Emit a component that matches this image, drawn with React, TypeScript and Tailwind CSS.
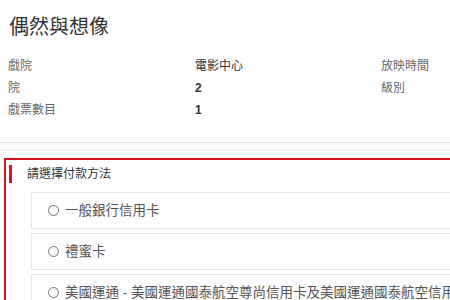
const font = { fontFamily: '"Liberation Sans", "Noto Sans CJK TC", sans-serif' };

const infoRows = [
  { label: '戲院', value: '電影中心', bold: false, extra: '放映時間' },
  { label: '院', value: '2', bold: true, extra: '級別' },
  { label: '戲票數目', value: '1', bold: true, extra: '' },
];

const payments = [
  '一般銀行信用卡',
  '禮蜜卡',
  '美國運通 - 美國運通國泰航空尊尚信用卡及美國運通國泰航空信用卡',
];

function PaymentOption({ label }: { label: string }) {
  return (
    <div className="flex items-center h-[37px] border border-[#e6e6e6] bg-white pl-[16px] whitespace-nowrap">
      <span className="w-[11px] h-[11px] rounded-full border border-[#777] bg-white shrink-0" />
      <span className="ml-[6px] text-[13.5px] leading-[20px] text-[#555]">{label}</span>
    </div>
  );
}

export default function App() {
  return (
    <div className="w-[450px] h-[300px] overflow-hidden bg-white" style={font}>
      <div className="w-[640px]">
        {/* movie summary */}
        <div className="pl-[8px] pt-[13px]">
          <h1 className="text-[20px] leading-[28px] text-[#333] pl-[1px] mb-[14px]">偶然與想像</h1>
          {infoRows.map((row) => (
            <div key={row.label} className="flex h-[22px] leading-[22px] text-[12px]">
              <div className="w-[187px] text-[#666]">{row.label}</div>
              <div className={`w-[186px] text-[#333] ${row.bold ? 'font-bold' : ''}`}>{row.value}</div>
              <div className="w-[186px] text-[#666]">{row.extra}</div>
            </div>
          ))}
        </div>

        <div className="mt-[21px] border-t border-[#e3e3e3] h-[8px] bg-[#fcfcfc]" />
        <div className="border-t border-[#e6e6e6] h-[8px]" />

        {/* payment section */}
        <div className="ml-[4px] border-2 border-[#d7141f] pl-[3px] pt-[5px] pb-4">
          <div className="flex items-center h-[18px]">
            <span className="w-[3px] h-[18px] bg-[#d7141f]" />
            <span className="ml-[15px] text-[12px] text-[#333]">請選擇付款方法</span>
          </div>
          <div className="ml-[22px] mt-[9px] flex flex-col gap-[4px]">
            {payments.map((p) => (
              <PaymentOption key={p} label={p} />
            ))}
          </div>
        </div>
      </div>
    </div>
  );
}
